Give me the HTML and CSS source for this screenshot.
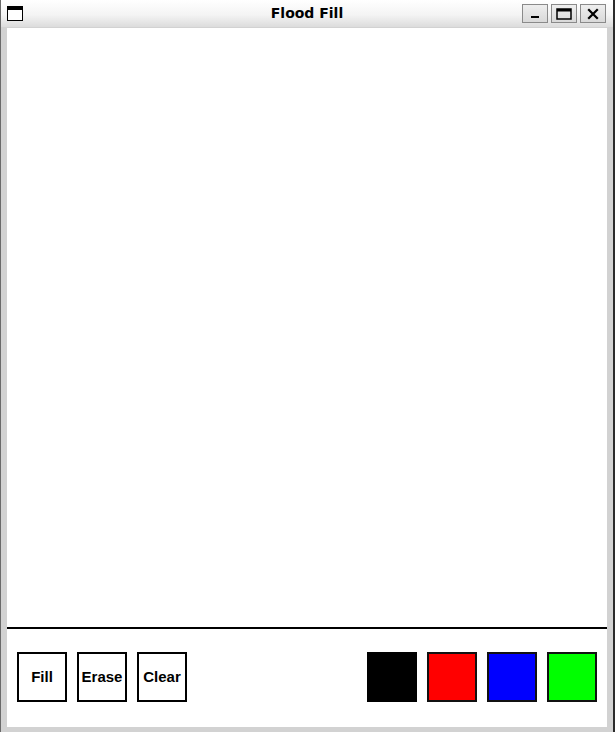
FILE: index.html
```html
<!DOCTYPE html>
<html>
<head>
<meta charset="utf-8">
<title>Flood Fill</title>
<link rel="stylesheet" href="styles.css">
</head>
<body>
<div class="window">
  <div class="titlebar">
    <div class="app-icon"><svg width="16" height="15" viewBox="0 0 16 15"><rect x="0.5" y="0.5" width="15" height="14" fill="#fff" stroke="#000"/><rect x="0" y="0" width="16" height="4" fill="#000"/></svg></div>
    <div class="title">Flood Fill</div>
    <div class="controls">
      <div class="ctl"><svg width="12" height="10" viewBox="0 0 12 10"><rect x="2" y="7" width="8" height="2" fill="#000"/></svg></div>
      <div class="ctl"><svg width="16" height="12" viewBox="0 0 16 12"><rect x="1" y="1" width="14" height="10" fill="none" stroke="#000" stroke-width="1.5"/><rect x="1" y="1" width="14" height="2.5" fill="#000"/></svg></div>
      <div class="ctl"><svg width="12" height="12" viewBox="0 0 12 12"><path d="M2 2 L10 10 M10 2 L2 10" stroke="#000" stroke-width="2.2" stroke-linecap="square"/></svg></div>
    </div>
  </div>
  <div class="client">
    <div class="canvas"></div>
    <div class="panel">
      <div class="tools">
        <div class="btn">Fill</div>
        <div class="btn">Erase</div>
        <div class="btn">Clear</div>
      </div>
      <div class="swatches">
        <div class="swatch black"></div>
        <div class="swatch red"></div>
        <div class="swatch blue"></div>
        <div class="swatch green"></div>
      </div>
    </div>
  </div>
</div>
</body>
</html>
```
FILE: styles.css
```css
html, body {
  margin: 0;
  padding: 0;
  width: 615px;
  height: 732px;
  overflow: hidden;
  background: #3a3a3a;
}
.window {
  width: 615px;
  height: 732px;
  box-sizing: border-box;
  display: flex;
  flex-direction: column;
  background: #d2d2d2;
  border-left: 1px solid #6a6a6a;
  border-right: 2px solid #2a2a2a;
}
.titlebar {
  height: 27px;
  display: flex;
  align-items: center;
  position: relative;
  background: linear-gradient(#ffffff 0%, #f4f4f4 55%, #dcdcdc 100%);
  flex: none;
}
.app-icon {
  width: 16px;
  height: 15px;
  margin-left: 6px;
  display: flex;
}
.title {
  position: absolute;
  left: 0;
  right: 0;
  text-align: center;
  font-family: "DejaVu Sans", sans-serif;
  font-weight: bold;
  font-size: 14px;
  color: #000;
  line-height: 27px;
  pointer-events: none;
}
.controls {
  margin-left: auto;
  margin-right: 7px;
  display: flex;
  gap: 3px;
  position: relative;
}
.ctl {
  width: 26px;
  height: 19px;
  box-sizing: border-box;
  border: 1px solid #8a8a8a;
  background: linear-gradient(#eeeeee, #d9d9d9);
  display: flex;
  align-items: center;
  justify-content: center;
}
.client {
  flex: 1;
  margin: 1px 6px 5px 6px;
  background: #fff;
  display: flex;
  flex-direction: column;
}
.canvas {
  flex: 1;
  background: #fff;
  border-bottom: 2px solid #000;
}
.panel {
  height: 98px;
  box-sizing: border-box;
  padding: 23px 10px 0 10px;
  display: flex;
  justify-content: space-between;
  align-items: flex-start;
}
.tools, .swatches {
  display: flex;
  gap: 10px;
}
.btn {
  width: 50px;
  height: 50px;
  box-sizing: border-box;
  border: 2px solid #000;
  display: flex;
  align-items: center;
  justify-content: center;
  padding-bottom: 2px;
  font-family: "Liberation Sans", Arial, sans-serif;
  font-weight: bold;
  font-size: 15px;
  color: #000;
}
.swatch {
  width: 50px;
  height: 50px;
  box-sizing: border-box;
  border: 2px solid #111;
}
.black { background: #000; border-color: #000; }
.red { background: #ff0000; }
.blue { background: #0000ff; }
.green { background: #00ff00; }
```
